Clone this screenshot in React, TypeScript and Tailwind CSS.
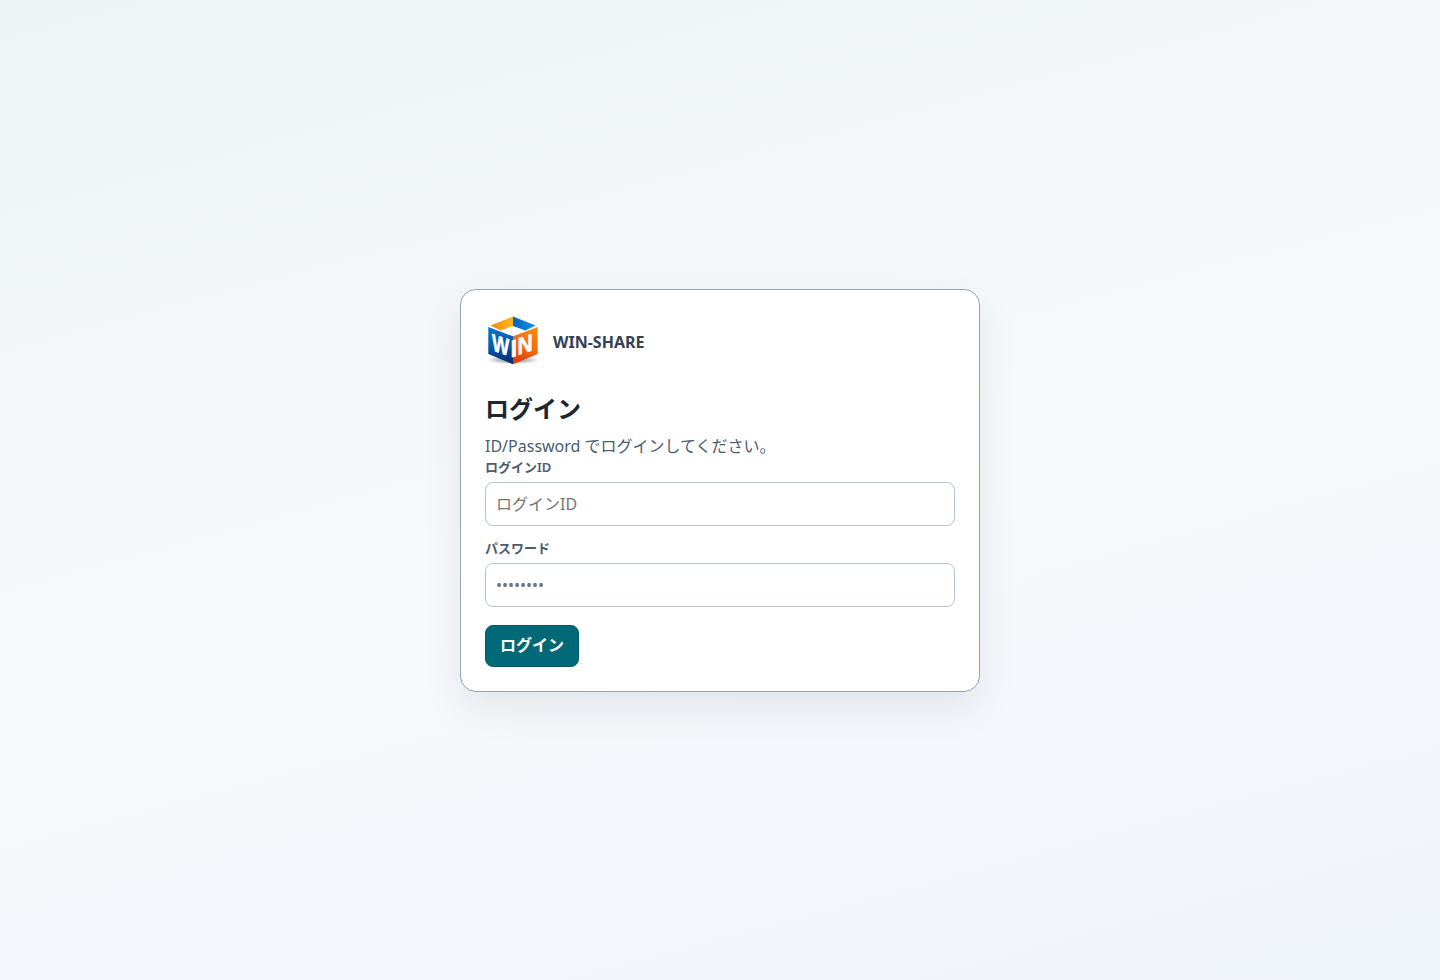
import { useId } from "react";
import type { InputHTMLAttributes } from "react";

function CubeLogo() {
  return (
    <svg viewBox="0 0 56 56" className="size-14 shrink-0" role="img" aria-label="WIN-SHARE">
      <defs>
        <linearGradient id="left" x1="0.2" y1="0" x2="0.3" y2="1">
          <stop offset="0" stopColor="#0b74cc" />
          <stop offset="0.5" stopColor="#0759ad" />
          <stop offset="0.75" stopColor="#06428f" />
          <stop offset="1" stopColor="#052f73" />
        </linearGradient>
        <linearGradient id="right" x1="0.7" y1="0" x2="0.4" y2="1">
          <stop offset="0" stopColor="#ff8a10" />
          <stop offset="0.5" stopColor="#f76a0c" />
          <stop offset="1" stopColor="#dc3f0c" />
        </linearGradient>
        <linearGradient id="topLeft" x1="0" y1="0" x2="1" y2="0">
          <stop offset="0" stopColor="#f58a0c" />
          <stop offset="1" stopColor="#ffb81c" />
        </linearGradient>
        <linearGradient id="topRight" x1="0" y1="0" x2="1" y2="0">
          <stop offset="0" stopColor="#0566c0" />
          <stop offset="1" stopColor="#0c93e8" />
        </linearGradient>
        <radialGradient id="ground">
          <stop offset="0" stopColor="#6b7280" stopOpacity="0.9" />
          <stop offset="0.6" stopColor="#9ca3af" stopOpacity="0.6" />
          <stop offset="1" stopColor="#d1d5db" stopOpacity="0" />
        </radialGradient>
      </defs>
      <ellipse cx="28" cy="46" rx="28" ry="4.500" fill="url(#ground)" />
      <path d="M28 2.500 5.500 11.500 15.500 16.500 28 12z" fill="url(#topLeft)" />
      <path d="M28 2.500 50.500 11.500 40.500 16.500 28 12z" fill="url(#topRight)" />
      <path d="M3.300 13 28 22.300V50.300L3.300 40z" fill="url(#left)" />
      <path d="M52.700 13 28 22.300V50.300L52.700 40z" fill="url(#right)" />
      <g
        fill="#fff"
        stroke="#fff"
        strokeWidth="0.600"
        fontFamily="'Liberation Sans', sans-serif"
        fontWeight="700"
        fontSize="24"
      >
        <text transform="matrix(0.76 0.24 0 1 7 36.500)">W</text>
        <text transform="matrix(1 -0.25 0 1 25.500 43.500)">I</text>
        <text transform="matrix(0.88 -0.27 0 1 32.500 41)">N</text>
      </g>
    </svg>
  );
}

type FieldProps = InputHTMLAttributes<HTMLInputElement> & { label: string };

function Field({ label, ...props }: FieldProps) {
  const id = useId();
  return (
    <div className="flex flex-col gap-1">
      <label htmlFor={id} className="text-[13px] leading-[21px] font-semibold text-[#4b5b70]">
        {label}
      </label>
      <input
        id={id}
        className="h-11 w-full rounded-lg border border-[#b6c2d1] bg-white px-2.5 text-base text-[#17212b] placeholder:text-[#757575]"
        {...props}
      />
    </div>
  );
}

export default function App() {
  return (
    <main className="flex min-h-screen items-center justify-center bg-[linear-gradient(165deg,#eef4f5_0%,#f7f9fb_52%,#f0f4fb_100%)] p-6 font-['Noto_Sans','Noto_Sans_CJK_JP',sans-serif]">
      <section className="w-full max-w-[520px] rounded-2xl border border-[#94a3b8] bg-white p-6 shadow-[0_16px_40px_rgba(15,23,42,0.08)]">
        <div className="flex items-center gap-3">
          <CubeLogo />
          <span className="text-base font-bold text-[#334155]">WIN-SHARE</span>
        </div>
        <h1 className="mt-[21px] mb-2 text-2xl leading-9 font-bold text-[#1c2630]">ログイン</h1>
        <p className="text-base leading-[22px] text-[#4b5b70]">ID/Password でログインしてください。</p>
        <form onSubmit={(event) => event.preventDefault()}>
          <div className="flex flex-col gap-3">
            <Field label="ログインID" type="text" placeholder="ログインID" autoComplete="username" />
            <Field label="パスワード" type="password" placeholder="••••••••" autoComplete="current-password" />
          </div>
          <button
            type="submit"
            className="mt-[18px] flex h-[42px] items-center rounded-lg border border-[#065967] bg-[#006978] px-3.5 pb-0.5 text-base font-bold text-white"
          >
            ログイン
          </button>
        </form>
      </section>
    </main>
  );
}
